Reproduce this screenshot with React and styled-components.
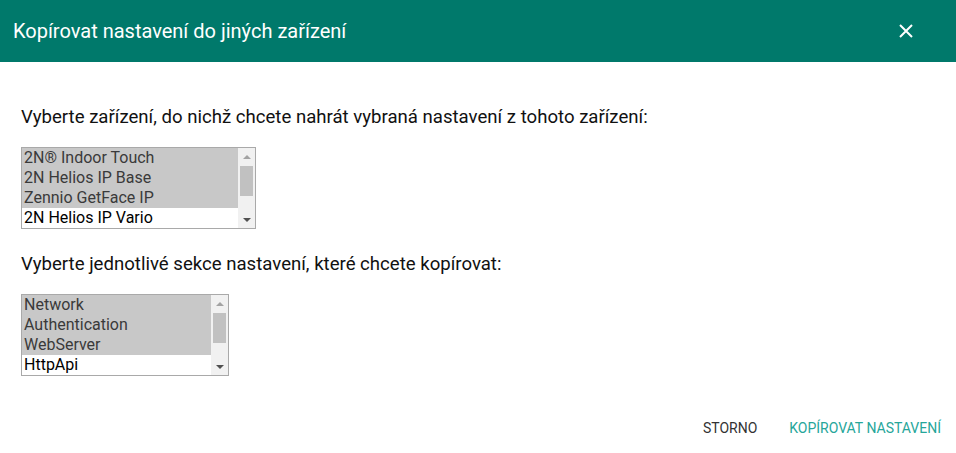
import React from 'react'
import styled, { createGlobalStyle } from 'styled-components'

const devices = [
    { name: '2N® Indoor Touch', selected: true },
    { name: '2N Helios IP Base', selected: true },
    { name: 'Zennio GetFace IP', selected: true },
    { name: '2N Helios IP Vario', selected: false },
]

const sections = [
    { name: 'Network', selected: true },
    { name: 'Authentication', selected: true },
    { name: 'WebServer', selected: true },
    { name: 'HttpApi', selected: false },
]

function ListBox({ items, width, thumbTop }) {
    return (
        <Box $width={width}>
            <Options>
                {items.map((item) => (
                    <Option key={item.name} $selected={item.selected}>
                        {item.name}
                    </Option>
                ))}
            </Options>
            <Scrollbar>
                <Arrow $dir="up" />
                <Track>
                    <Thumb style={{ marginTop: thumbTop }} />
                </Track>
                <Arrow $dir="down" />
            </Scrollbar>
        </Box>
    )
}

export default function App() {
    return (
        <>
            <GlobalStyle />
            <Dialog>
                <Header>
                    <Title>Kopírovat nastavení do jiných zařízení</Title>
                    <Close aria-label="close">
                        <svg width="14" height="14" viewBox="0 0 14 14">
                            <path d="M1 1L13 13M13 1L1 13" stroke="#fff" strokeWidth="2" />
                        </svg>
                    </Close>
                </Header>
                <Body>
                    <Label>Vyberte zařízení, do nichž chcete nahrát vybraná nastavení z tohoto zařízení:</Label>
                    <ListBox items={devices} width={235} thumbTop={1} />
                    <Label $second>Vyberte jednotlivé sekce nastavení, které chcete kopírovat:</Label>
                    <ListBox items={sections} width={208} thumbTop={1} />
                </Body>
                <Actions>
                    <ActionButton>Storno</ActionButton>
                    <ActionButton $primary>Kopírovat nastavení</ActionButton>
                </Actions>
            </Dialog>
        </>
    )
}

const GlobalStyle = createGlobalStyle`
    body {
        margin: 0;
        background: #fff;
        font-family: Roboto, 'Liberation Sans', sans-serif;
    }
`

const Dialog = styled.div`
    width: 956px;
    height: 453px;
    display: flex;
    flex-direction: column;
    background: #fff;
`

const Header = styled.div`
    height: 62px;
    background: #00796b;
    display: flex;
    align-items: center;
    justify-content: space-between;
    padding: 0 43px 0 13px;
    flex-shrink: 0;
`

const Title = styled.h2`
    margin: 0;
    color: #fff;
    font-size: 20px;
    font-weight: 400;
`

const Close = styled.button`
    border: none;
    background: none;
    padding: 0;
    display: flex;
    cursor: pointer;
`

const Body = styled.div`
    padding: 44px 21px 0;
    display: flex;
    flex-direction: column;
    align-items: flex-start;
`

const Label = styled.p`
    margin: ${(p) => (p.$second ? '24px' : '0')} 0 19px;
    font-size: 18.6px;
    line-height: 22px;
    color: #111;
`

const Box = styled.div`
    box-sizing: border-box;
    width: ${(p) => p.$width}px;
    height: 82px;
    border: 1px solid #a9a9a9;
    display: flex;
    background: #fff;
`

const Options = styled.div`
    flex: 1;
    display: flex;
    flex-direction: column;
`

const Option = styled.div`
    height: 20px;
    line-height: 20px;
    padding-left: 2px;
    font-size: 16px;
    color: ${(p) => (p.$selected ? '#3a3a3a' : '#000')};
    background: ${(p) => (p.$selected ? '#c8c8c8' : '#fff')};
    white-space: nowrap;
`

const Scrollbar = styled.div`
    width: 17px;
    background: #f1f1f1;
    display: flex;
    flex-direction: column;
`

const Arrow = styled.div`
    height: 17px;
    display: flex;
    align-items: center;
    justify-content: center;
    &::after {
        content: '';
        width: 0;
        height: 0;
        border-left: 4px solid transparent;
        border-right: 4px solid transparent;
        ${(p) =>
            p.$dir === 'up'
                ? 'border-bottom: 4px solid #a3a3a3;'
                : 'border-top: 4px solid #505050;'}
    }
`

const Track = styled.div`
    flex: 1;
    padding: 0 2px;
`

const Thumb = styled.div`
    height: 30px;
    background: #c1c1c1;
`

const Actions = styled.div`
    margin-top: auto;
    height: 50px;
    display: flex;
    justify-content: flex-end;
    align-items: center;
    gap: 2px;
`

const ActionButton = styled.button`
    border: none;
    background: none;
    padding: 0 15px;
    height: 36px;
    font-family: Roboto, 'Liberation Sans', sans-serif;
    font-size: 14px;
    text-transform: uppercase;
    color: ${(p) => (p.$primary ? '#26a69a' : '#333')};
    cursor: pointer;
`
